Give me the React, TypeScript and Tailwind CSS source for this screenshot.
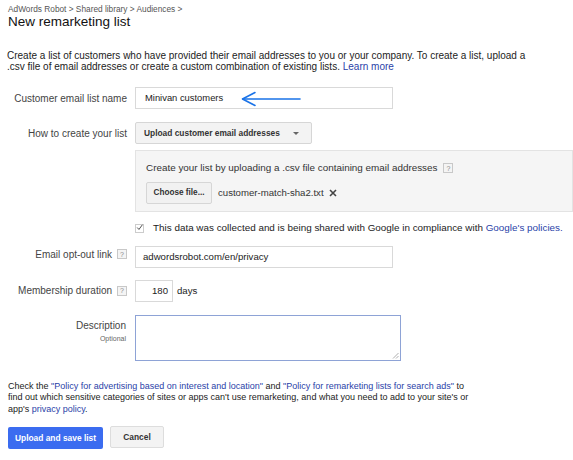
const Help = () => (
  <span className="inline-flex h-[10px] w-[10px] items-center justify-center border border-[#c8c8c8] bg-[#f4f4f4] text-[7px] leading-none text-[#888]">
    ?
  </span>
);

const Label = ({ children, help, className = "" }: { children: React.ReactNode; help?: boolean; className?: string }) => (
  <div className={`flex w-[128px] shrink-0 items-center justify-end gap-[5px] pr-[1px] text-[10px] text-[#444] ${className}`}>
    <span>{children}</span>
    {help && <Help />}
  </div>
);

export default function App() {
  return (
    <div className="h-[460px] w-[573px] overflow-hidden bg-white font-['Liberation_Sans',Arial,sans-serif] text-[#222]">
      <header className="pl-[8px] pt-[4px]">
        <p className="text-[8.3px] leading-[10px] text-[#555]">AdWords Robot &gt; Shared library &gt; Audiences &gt;</p>
        <h1 className="text-[13.5px] leading-[16px] text-[#111]">New remarketing list</h1>
      </header>

      <p className="mt-[20px] pl-[7px] pr-[20px] text-[10px] leading-[11px] text-[#222]">
        Create a list of customers who have provided their email addresses to you or your company. To create a list, upload a
        <br />
        .csv file of email addresses or create a custom combination of existing lists.{" "}
        <span className="text-[#2a3fa8]">Learn more</span>
      </p>

      <div className="mt-[15px] flex flex-col">
        <div className="flex items-center gap-[7px]">
          <Label>Customer email list name</Label>
          <div className="relative flex h-[22px] w-[258px] items-center border border-[#d9d9d9] pl-[9px] text-[9.4px] text-[#222]">
            Minivan customers
            <svg className="absolute left-[104px] top-[3px]" width="62" height="16" viewBox="0 0 62 16">
              <path d="M3 8 H60" stroke="#1a73e8" strokeWidth="1.6" fill="none" strokeLinecap="round" />
              <path d="M15 1.5 L2.5 8 L15 14.5" stroke="#1a73e8" strokeWidth="1.6" fill="none" strokeLinecap="round" strokeLinejoin="round" />
            </svg>
          </div>
        </div>

        <div className="mt-[13px] flex items-center gap-[7px]">
          <Label>How to create your list</Label>
          <div className="flex h-[22px] w-[177px] items-center justify-between rounded-[2px] border border-[#d6d6d6] bg-[#f3f3f3] pl-[8px] pr-[12px] text-[8.4px] font-bold text-[#333]">
            Upload customer email addresses
            <span className="h-0 w-0 border-l-[3px] border-r-[3px] border-t-[3px] border-l-transparent border-r-transparent border-t-[#666]" />
          </div>
        </div>

        <div className="mt-[6px] ml-[135px] h-[62px] border border-[#e3e3e3] bg-[#f5f5f5] pl-[10px] pt-[10px]">
          <div className="flex items-center gap-[6px] text-[9.9px] text-[#333]">
            Create your list by uploading a .csv file containing email addresses
            <Help />
          </div>
          <div className="mt-[6px] flex items-center gap-[6px]">
            <div className="flex h-[22px] w-[66px] items-center justify-center rounded-[2px] border border-[#d6d6d6] bg-[#f1f1f1] text-[8.2px] font-bold text-[#333]">
              Choose file...
            </div>
            <span className="text-[9.6px] text-[#333]">customer-match-sha2.txt</span>
            <svg width="8" height="8" viewBox="0 0 8 8" className="-ml-[1px]">
              <path d="M1 1 L7 7 M7 1 L1 7" stroke="#444" strokeWidth="1.6" />
            </svg>
          </div>
        </div>

        <div className="mt-[9px] ml-[135px] flex items-center gap-[9px] text-[9.9px] text-[#222]">
          <span className="flex h-[9px] w-[9px] items-center justify-center border border-[#ccc] bg-white">
            <svg width="9" height="9" viewBox="0 0 9 9" className="-mt-[1px]">
              <path d="M1.5 4.5 L3.8 7 L8.2 1" stroke="#333" strokeWidth="1.1" fill="none" />
            </svg>
          </span>
          <span>
            This data was collected and is being shared with Google in compliance with{" "}
            <span className="text-[#2a3fa8]">Google's policies.</span>
          </span>
        </div>

        <div className="mt-[10px] flex items-center gap-[7px]">
          <Label className="-mt-[5px]" help>Email opt-out link</Label>
          <div className="flex h-[22px] w-[258px] items-center border border-[#d9d9d9] pl-[7px] text-[9.6px] text-[#222]">
            adwordsrobot.com/en/privacy
          </div>
        </div>

        <div className="mt-[12px] flex items-center gap-[7px]">
          <Label help>Membership duration</Label>
          <div className="flex h-[22px] w-[38px] items-center justify-end border border-[#d9d9d9] pr-[4px] text-[9.6px] text-[#222]">
            180
          </div>
          <span className="-ml-[3px] text-[9.6px] text-[#222]">days</span>
        </div>

        <div className="mt-[13px] flex items-start gap-[7px]">
          <div className="flex w-[128px] shrink-0 flex-col items-end pt-[3px] pr-[2px]">
            <span className="text-[10px] text-[#444]">Description</span>
            <span className="mt-[1px] text-[7px] text-[#666]">Optional</span>
          </div>
          <div className="relative h-[46px] w-[266px] border border-[#8ea3d6]">
            <svg className="absolute bottom-[1px] right-[1px]" width="7" height="7" viewBox="0 0 7 7">
              <path d="M6.5 1 L1 6.5 M6.5 4 L4 6.5" stroke="#999" strokeWidth="0.8" />
            </svg>
          </div>
        </div>
      </div>

      <p className="mt-[20px] ml-[8px] w-[520px] text-[9px] leading-[11.5px] text-[#222]">
        Check the <span className="text-[#2a3fa8]">"Policy for advertising based on interest and location"</span> and{" "}
        <span className="text-[#2a3fa8]">"Policy for remarketing lists for search ads"</span> to
        <br />
        find out which sensitive categories of sites or apps can't use remarketing, and what you need to add to your site's or
        <br />
        app's <span className="text-[#2a3fa8]">privacy policy</span>.
      </p>

      <div className="mt-[12px] flex items-start gap-[7px] pl-[8px]">
        <div className="flex h-[22px] w-[95px] items-center justify-center rounded-[2px] bg-[#3b6cf0] text-[8.4px] font-bold text-white">
          Upload and save list
        </div>
        <div className="-mt-[1px] flex h-[22px] w-[54px] items-center justify-center rounded-[2px] border border-[#ddd] bg-[#f3f3f3] text-[8.4px] font-bold text-[#333]">
          Cancel
        </div>
      </div>
    </div>
  );
}
